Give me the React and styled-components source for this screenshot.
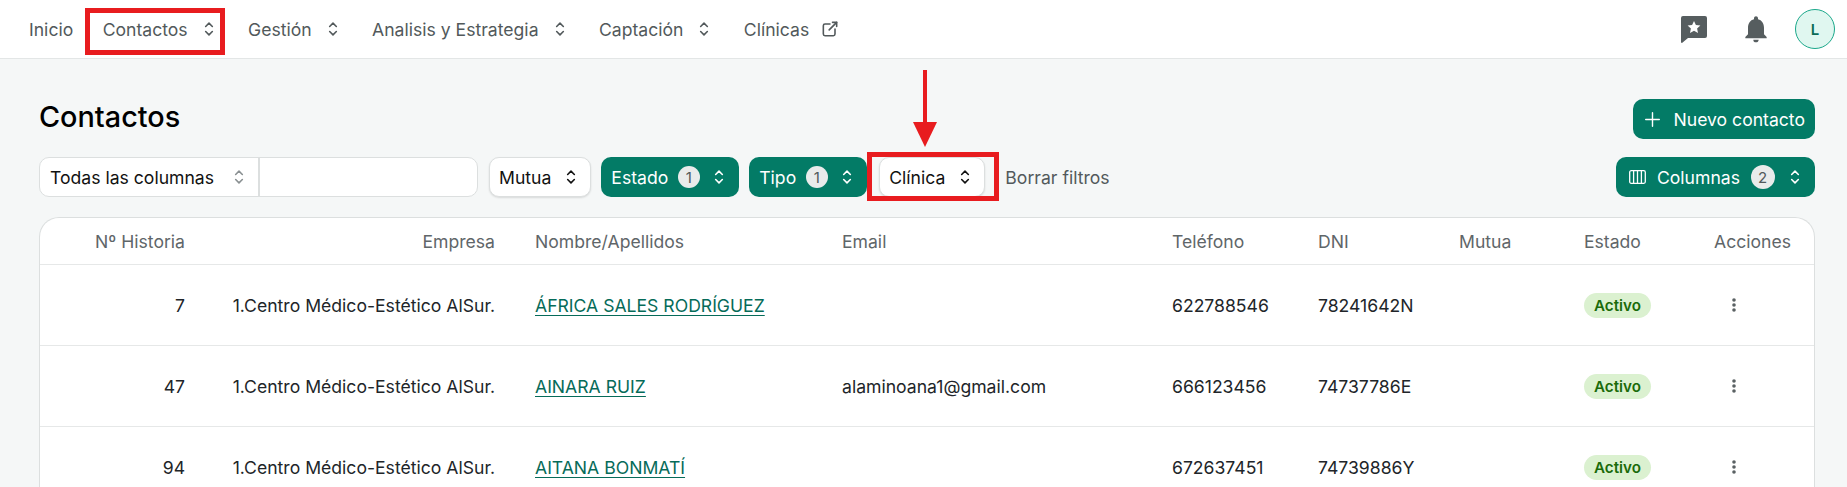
import React from "react"
import styled, {createGlobalStyle} from "styled-components"
import {MdNotifications} from "react-icons/md"

const GREEN = "#037b66"

const GlobalStyle = createGlobalStyle`
    html, body {
        margin: 0;
        height: 100%;
        overflow: hidden;
        background: #f5f7f7;
        font-family: Inter, "Liberation Sans", sans-serif;
    }
    * {
        box-sizing: border-box;
    }
`

const columnas = "165px 310px 307px 330px 146px 141px 125px 130px 1fr"

const contactos = [
    {historia: "7", nombre: "ÁFRICA SALES RODRÍGUEZ", email: "", telefono: "622788546", dni: "78241642N"},
    {historia: "47", nombre: "AINARA RUIZ", email: "alaminoana1@gmail.com", telefono: "666123456", dni: "74737786E"},
    {historia: "94", nombre: "AITANA BONMATÍ", email: "", telefono: "672637451", dni: "74739886Y"},
]

function Selector() {
    return (
        <svg width="20" height="20" viewBox="0 0 24 24" fill="none" stroke="currentColor" strokeWidth="1.9" strokeLinecap="round" strokeLinejoin="round">
            <path d="M8 9l4-4 4 4" />
            <path d="M16 15l-4 4-4-4" />
        </svg>
    )
}

function ExternalLink() {
    return (
        <svg width="20" height="20" viewBox="0 0 24 24" fill="none" stroke="currentColor" strokeWidth="1.9" strokeLinecap="round" strokeLinejoin="round">
            <path d="M12 6H6a2 2 0 0 0-2 2v10a2 2 0 0 0 2 2h10a2 2 0 0 0 2-2v-6" />
            <path d="M11 13l9-9" />
            <path d="M15 4h5v5" />
        </svg>
    )
}

function StarBubble() {
    return (
        <svg width="28" height="28" viewBox="0 0 28 28">
            <path d="M3 1h22a2 2 0 0 1 2 2v18a2 2 0 0 1-2 2H8l-6 5a1 1 0 0 1-1-1V3a2 2 0 0 1 2-2z" fill="#565d5f" />
            <path d="M14 6l1.9 4.1 4.5.5-3.3 3 .9 4.4-4-2.2-4 2.2.9-4.4-3.3-3 4.5-.5z" fill="#ffffff" />
        </svg>
    )
}

function ColumnsIcon() {
    return (
        <svg width="17" height="14" viewBox="0 0 17 14" fill="none" stroke="currentColor" strokeWidth="1.3">
            <rect x="0.7" y="0.7" width="15.6" height="12.6" rx="1.5" />
            <path d="M4.6 1v12M8.5 1v12M12.4 1v12" />
        </svg>
    )
}

function Plus() {
    return (
        <svg width="15" height="15" viewBox="0 0 15 15" fill="none" stroke="currentColor" strokeWidth="1.4" strokeLinecap="round">
            <path d="M7.5 .7v13.6M.7 7.5h13.6" />
        </svg>
    )
}

function Dots() {
    return (
        <svg width="6" height="16" viewBox="0 0 6 16" fill="#5a6163">
            <circle cx="3" cy="3" r="1.8" />
            <circle cx="3" cy="8" r="1.8" />
            <circle cx="3" cy="13" r="1.8" />
        </svg>
    )
}

export default function App() {
    return (
        <>
            <GlobalStyle />
            <TopBar>
                <Menu>
                    <MenuItem>Inicio</MenuItem>
                    <MenuItem $marcado>Contactos <Selector /></MenuItem>
                    <MenuItem>Gestión <Selector /></MenuItem>
                    <MenuItem>Analisis y Estrategia <Selector /></MenuItem>
                    <MenuItem>Captación <Selector /></MenuItem>
                    <MenuItem>Clínicas <ExternalLink /></MenuItem>
                </Menu>
                <TopActions>
                    <StarBubble />
                    <BellIcon><MdNotifications size={32} /></BellIcon>
                    <Avatar>L</Avatar>
                </TopActions>
            </TopBar>
            <Main>
                <TitleRow>
                    <Title>Contactos</Title>
                    <GreenButton $izquierda="12px" $hueco="13px"><Plus /> Nuevo contacto</GreenButton>
                </TitleRow>
                <Toolbar>
                    <SearchGroup>
                        <ColumnPicker>Todas las columnas <Selector /></ColumnPicker>
                        <SearchInput />
                    </SearchGroup>
                    <FilterButton>Mutua <Selector /></FilterButton>
                    <GreenButton>Estado <Count>1</Count> <Selector /></GreenButton>
                    <GreenButton>Tipo <Count>1</Count> <Selector /></GreenButton>
                    <ClinicaWrap>
                        <FilterButton>Clínica <Selector /></FilterButton>
                        <Arrow width="26" height="78" viewBox="0 0 26 78">
                            <path d="M11 0h4v52h-4z" fill="#e81c1f" />
                            <path d="M1 52h24L13 77z" fill="#e81c1f" />
                        </Arrow>
                    </ClinicaWrap>
                    <ClearFilters>Borrar filtros</ClearFilters>
                    <Spacer />
                    <GreenButton $izquierda="13px" $hueco="10.5px"><ColumnsIcon /> Columnas <Count $grande>2</Count> <Selector /></GreenButton>
                </Toolbar>
                <TableCard>
                    <HeaderRow>
                        <HeaderCell $derecha>Nº Historia</HeaderCell>
                        <HeaderCell $derecha>Empresa</HeaderCell>
                        <HeaderCell>Nombre/Apellidos</HeaderCell>
                        <HeaderCell>Email</HeaderCell>
                        <HeaderCell>Teléfono</HeaderCell>
                        <HeaderCell>DNI</HeaderCell>
                        <HeaderCell>Mutua</HeaderCell>
                        <HeaderCell>Estado</HeaderCell>
                        <HeaderCell>Acciones</HeaderCell>
                    </HeaderRow>
                    {contactos.map((c) => (
                        <DataRow key={c.historia}>
                            <Cell $derecha>{c.historia}</Cell>
                            <Cell $derecha>1.Centro Médico-Estético AlSur.</Cell>
                            <Cell><NameLink>{c.nombre}</NameLink></Cell>
                            <Cell>{c.email}</Cell>
                            <Cell>{c.telefono}</Cell>
                            <Cell>{c.dni}</Cell>
                            <Cell />
                            <Cell><Status>Activo</Status></Cell>
                            <ActionCell><Dots /></ActionCell>
                        </DataRow>
                    ))}
                </TableCard>
            </Main>
        </>
    )
}

const TopBar = styled.header`
    height: 59px;
    background: #ffffff;
    border-bottom: 1px solid #e3e6e6;
    padding: 0 12px 0 29px;
    display: flex;
    align-items: center;
    justify-content: space-between;
`
const Menu = styled.nav`
    display: flex;
    align-items: center;
    gap: 29.4px;
`
const MenuItem = styled.a`
    position: relative;
    display: flex;
    align-items: center;
    gap: 11px;
    height: 22px;
    font-size: 17.6px;
    color: #52595b;

    ${(p) => p.$marcado && `
        &::after {
            content: "";
            position: absolute;
            top: -10px;
            bottom: -15px;
            left: -18px;
            right: -6px;
            border: 5px solid #e81c1f;
        }
    `}
`
const TopActions = styled.div`
    display: flex;
    align-items: center;
`
const BellIcon = styled.span`
    display: flex;
    margin: 0 23px 0 32px;
    color: #565d5f;
`
const Avatar = styled.div`
    width: 40px;
    height: 40px;
    border-radius: 50%;
    background: #e0f7f0;
    border: 1px solid #1aa88a;
    color: #0b6b57;
    font-size: 15px;
    font-weight: 600;
    display: flex;
    align-items: center;
    justify-content: center;
`
const Main = styled.main`
    padding: 40px 32px 0 39px;
`
const TitleRow = styled.div`
    height: 40px;
    margin-bottom: 18px;
    display: flex;
    align-items: center;
    justify-content: space-between;
`
const Title = styled.h1`
    margin: 0 0 6px;
    font-size: 28.8px;
    font-weight: 500;
    color: #000000;
`
const Toolbar = styled.div`
    height: 40px;
    margin-bottom: 20px;
    display: flex;
    align-items: center;
    gap: 10px;
`
const SearchGroup = styled.div`
    width: 439px;
    height: 40px;
    margin-right: 1px;
    background: #ffffff;
    border: 1px solid #dcdfdf;
    border-radius: 10px;
    display: flex;
    overflow: hidden;
`
const ColumnPicker = styled.div`
    width: 220px;
    padding: 0 9px 0 10px;
    border-right: 2px solid #dcdfdf;
    display: flex;
    align-items: center;
    justify-content: space-between;
    font-size: 17.6px;
    color: #111111;

    svg {
        color: #8a9092;
    }
`
const SearchInput = styled.input`
    flex: 1;
    min-width: 0;
    border: 0;
    outline: 0;
    background: transparent;
`
const FilterButton = styled.button`
    height: 40px;
    padding: 0 9px;
    background: #ffffff;
    border: 1px solid #dcdfdf;
    border-radius: 10px;
    box-shadow: 0 1px 2px rgba(0, 0, 0, 0.12);
    display: flex;
    align-items: center;
    gap: 10px;
    font-family: inherit;
    font-size: 17.6px;
    color: #111111;
`
const GreenButton = styled.button`
    height: 40px;
    padding: 0 10px 0 ${(p) => p.$izquierda || "10px"};
    background: ${GREEN};
    border: 0;
    border-radius: 10px;
    display: flex;
    align-items: center;
    gap: ${(p) => p.$hueco || "9.5px"};
    font-family: inherit;
    font-size: 17.6px;
    font-weight: 400;
    color: #ffffff;
`
const Count = styled.span`
    width: ${(p) => (p.$grande ? "24px" : "22px")};
    height: ${(p) => (p.$grande ? "24px" : "22px")};
    border-radius: 50%;
    background: #e9ebeb;
    color: #52595b;
    font-size: 15px;
    font-weight: 400;
    display: flex;
    align-items: center;
    justify-content: center;
`
const ClinicaWrap = styled.div`
    position: relative;
    margin-left: 2px;

    &::after {
        content: "";
        position: absolute;
        top: -5px;
        bottom: -4px;
        left: -12px;
        right: -14px;
        border: 5px solid #e81c1f;
    }
`
const Arrow = styled.svg`
    position: absolute;
    left: 33px;
    top: -87px;
`
const ClearFilters = styled.span`
    margin-left: 10px;
    font-size: 17.6px;
    color: #52595b;
`
const Spacer = styled.div`
    flex: 1;
`
const TableCard = styled.section`
    background: #ffffff;
    border: 1px solid #dcdfdf;
    border-radius: 20px 20px 0 0;
    border-bottom: 0;
`
const HeaderRow = styled.div`
    height: 47px;
    display: grid;
    grid-template-columns: ${columnas};
    align-items: center;
    border-bottom: 1px solid #e6e8e8;
`
const HeaderCell = styled.div`
    padding: 0 20px;
    font-size: 17.6px;
    color: #5f6669;
    text-align: ${(p) => (p.$derecha ? "right" : "left")};
    white-space: nowrap;
`
const DataRow = styled.div`
    height: 81px;
    display: grid;
    grid-template-columns: ${columnas};
    align-items: center;
    border-bottom: 1px solid #e6e8e8;
`
const Cell = styled.div`
    padding: 0 20px;
    font-size: 17.6px;
    color: #212529;
    text-align: ${(p) => (p.$derecha ? "right" : "left")};
    white-space: nowrap;
`
const ActionCell = styled.div`
    padding-left: 37px;
    display: flex;
    align-items: center;
`
const NameLink = styled.a`
    color: #066b59;
    text-decoration: underline;
    text-underline-offset: 3px;
`
const Status = styled.span`
    display: inline-flex;
    align-items: center;
    height: 25px;
    padding: 0 10px;
    border-radius: 13px;
    background: #dbf1d0;
    color: #1a6b0a;
    font-size: 15.2px;
    font-weight: 600;
`
